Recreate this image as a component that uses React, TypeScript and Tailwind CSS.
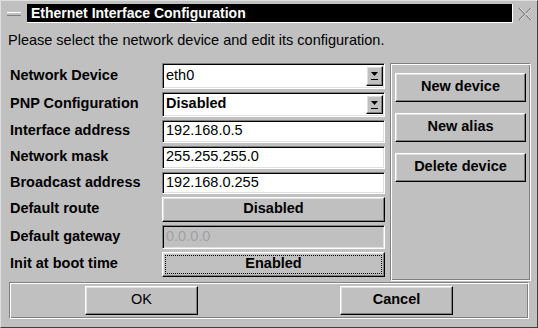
import { ReactNode } from 'react'

const font = { fontFamily: '"Liberation Sans", Arial, sans-serif' }

const raised = 'border border-t-white border-l-white border-b-black border-r-black shadow-[inset_-1px_-1px_0_#808080,inset_1px_1px_0_#dfdfdf]'
const sunken = 'border border-t-[#808080] border-l-[#808080] border-b-white border-r-white shadow-[inset_1px_1px_0_#000,inset_-1px_-1px_0_#dfdfdf]'
const groove = 'border border-t-[#808080] border-l-[#808080] border-b-white border-r-white shadow-[inset_1px_1px_0_#fff,inset_-1px_-1px_0_#808080]'

function Label({ children, h }: { children: ReactNode; h: string }) {
  return <div className={`${h} flex items-center text-[14.5px] font-bold text-black`}>{children}</div>
}

function Combo({ value, bold, h }: { value: string; bold?: boolean; h: string }) {
  return (
    <div className={`${h} ${sunken} flex items-center bg-white`}>
      <span className={`flex-1 pl-[3px] text-[14.5px] text-black ${bold ? 'font-bold' : ''}`}>{value}</span>
      <div className={`${raised} mr-[1px] flex h-[calc(100%-4px)] w-[17px] flex-col items-center justify-center bg-[#c0c0c0]`}>
        <svg width="9" height="7" viewBox="0 0 9 7">
          <polygon points="1,1 8,1 4.5,5" fill="#000" />
        </svg>
        <div className="mt-[1px] h-[1px] w-[7px] bg-black" />
      </div>
    </div>
  )
}

function Field({ value, h, disabled }: { value: string; h: string; disabled?: boolean }) {
  return (
    <div className={`${h} ${sunken} flex items-center ${disabled ? 'bg-[#c0c0c0]' : 'bg-white'}`}>
      <span className={`pl-[3px] text-[14.5px] ${disabled ? 'text-[#a0a0a0]' : 'text-black'}`}>{value}</span>
    </div>
  )
}

function Btn({ children, className = '', focus, bold = true }: { children: ReactNode; className?: string; focus?: boolean; bold?: boolean }) {
  return (
    <div className={`${raised} ${className} flex items-center justify-center bg-[#c0c0c0] p-[2px]`}>
      <div className={`flex h-full w-full items-center justify-center ${focus ? 'border border-dotted border-black' : ''}`}>
        <span className={`text-[14.5px] text-black ${bold ? 'font-bold' : ''}`}>{children}</span>
      </div>
    </div>
  )
}

export default function App() {
  return (
    <div style={font} className="h-[328px] w-[538px] overflow-hidden bg-[#c0c0c0]">
      <div className="flex h-full w-full flex-col border border-t-[#dfdfdf] border-l-[#dfdfdf] border-b-[#404040] border-r-[#404040]">
        {/* title bar */}
        <div className="flex h-[24px] items-center pt-[1px]">
          <div className="ml-[6px] flex w-[20px] items-center">
            <div className="h-[3px] w-[14px] border-t border-t-white bg-[#c0c0c0] shadow-[0_1px_0_#808080]" />
          </div>
          <div className="flex h-[19px] w-[486px] items-center border-r border-b border-white bg-black pl-[4px]">
            <span className="text-[14px] font-bold text-white">Ethernet Interface Configuration</span>
          </div>
          <div className="flex flex-1 items-center justify-center">
            <svg width="16" height="16" viewBox="0 0 16 16">
              <path d="M2 2 L14 14 M14 2 L2 14" stroke="#808080" strokeWidth="1.3" fill="none" />
              <path d="M3 2 L15 14 M15 2 L3 14" stroke="#f0f0f0" strokeWidth="0.7" fill="none" />
            </svg>
          </div>
        </div>

        <div className="ml-[7px] mt-[5px] text-[14.5px] text-black">Please select the network device and edit its configuration.</div>

        <div className="ml-[9px] mt-[11px] flex">
          <div className="flex w-[152px] flex-col gap-[3px]">
            <Label h="h-[26px]">Network Device</Label>
            <Label h="h-[25px]">PNP Configuration</Label>
            <Label h="h-[23px]">Interface address</Label>
            <Label h="h-[23px]">Network mask</Label>
            <Label h="h-[22px]">Broadcast address</Label>
            <Label h="h-[25px]">Default route</Label>
            <Label h="h-[24px]">Default gateway</Label>
            <Label h="h-[25px]">Init at boot time</Label>
          </div>
          <div className="flex w-[223px] flex-col gap-[3px]">
            <Combo h="h-[26px]" value="eth0" />
            <Combo h="h-[25px]" value="Disabled" bold />
            <Field h="h-[23px]" value="192.168.0.5" />
            <Field h="h-[23px]" value="255.255.255.0" />
            <Field h="h-[22px]" value="192.168.0.255" />
            <Btn className="h-[25px]">Disabled</Btn>
            <Field h="h-[24px]" value="0.0.0.0" disabled />
            <Btn className="h-[25px]" focus>Enabled</Btn>
          </div>
          <div className={`${groove} ml-[5px] flex h-[218px] w-[141px] flex-col gap-[11px] px-[4px] pt-[9px]`}>
            <Btn className="h-[29px]">New device</Btn>
            <Btn className="h-[29px]">New alias</Btn>
            <Btn className="h-[29px]">Delete device</Btn>
          </div>
        </div>

        <div className={`${groove} mx-[8px] mt-[1px] flex h-[37px] items-start pt-[3px]`}>
          <Btn className="ml-[75px] h-[29px] w-[113px]" bold={false}>OK</Btn>
          <Btn className="ml-[142px] h-[29px] w-[113px]">Cancel</Btn>
        </div>
      </div>
    </div>
  )
}
